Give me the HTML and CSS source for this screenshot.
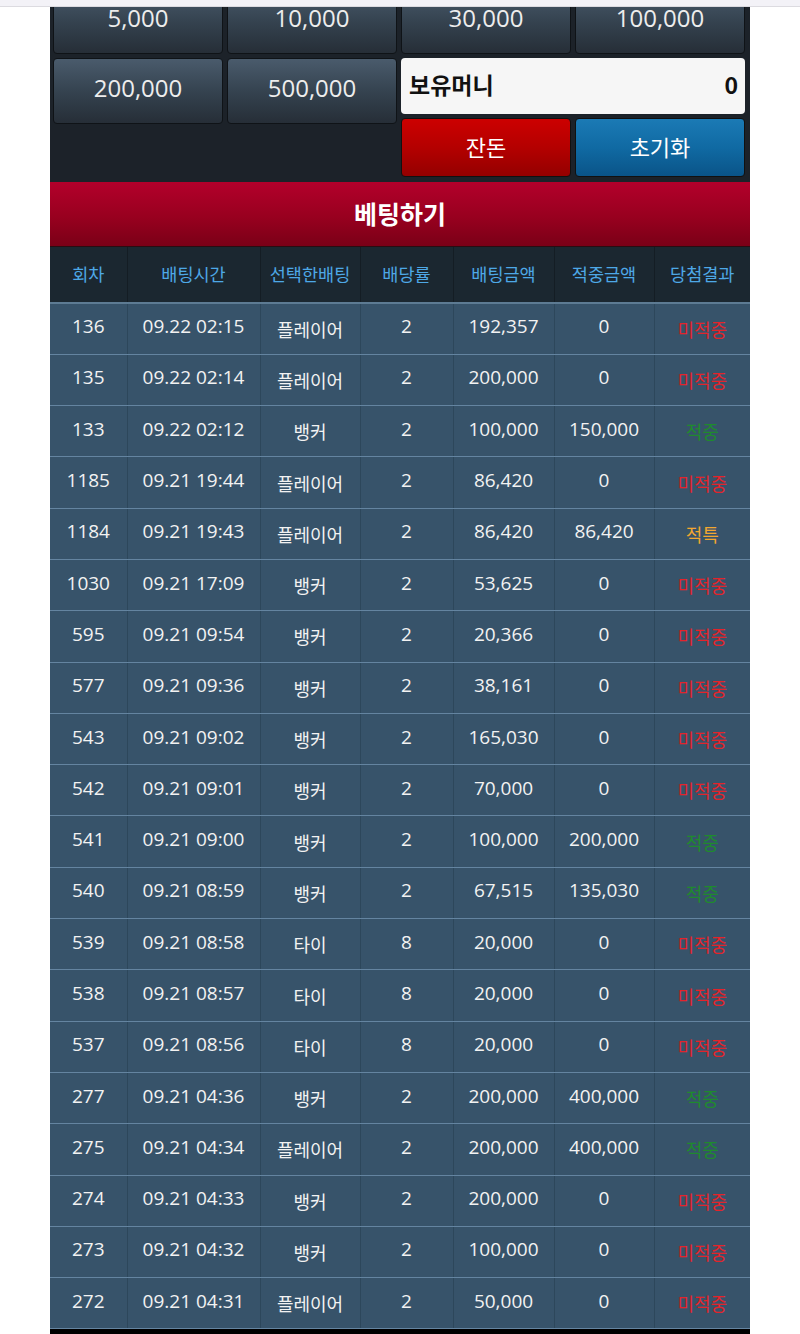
FILE: index.html
```html
<!DOCTYPE html>
<html lang="ko">
<head>
<meta charset="utf-8">
<title>베팅하기</title>
<link rel="stylesheet" href="styles.css">
</head>
<body>
<div class="topbar"></div>
<div class="viewport">
  <div class="panel">
    <div class="controls">
      <button class="chip">5,000</button>
      <button class="chip">10,000</button>
      <button class="chip">30,000</button>
      <button class="chip">100,000</button>
      <button class="chip">200,000</button>
      <button class="chip">500,000</button>
      <div class="side">
        <div class="balance"><span>보유머니</span><span>0</span></div>
        <div class="actions">
          <button class="btn red">잔돈</button>
          <button class="btn blue">초기화</button>
        </div>
      </div>
    </div>
    <div class="title">베팅하기</div>
    <table class="bets">
      <colgroup>
        <col class="c1"><col class="c2"><col class="c3"><col class="c4"><col class="c5"><col class="c6"><col class="c7">
      </colgroup>
      <thead>
        <tr><th>회차</th><th>배팅시간</th><th>선택한배팅</th><th>배당률</th><th>배팅금액</th><th>적중금액</th><th>당첨결과</th></tr>
      </thead>
      <tbody>
        <tr><td>136</td><td>09.22 02:15</td><td class="ko">플레이어</td><td>2</td><td>192,357</td><td>0</td><td class="ko lose">미적중</td></tr>
        <tr><td>135</td><td>09.22 02:14</td><td class="ko">플레이어</td><td>2</td><td>200,000</td><td>0</td><td class="ko lose">미적중</td></tr>
        <tr><td>133</td><td>09.22 02:12</td><td class="ko">뱅커</td><td>2</td><td>100,000</td><td>150,000</td><td class="ko win">적중</td></tr>
        <tr><td>1185</td><td>09.21 19:44</td><td class="ko">플레이어</td><td>2</td><td>86,420</td><td>0</td><td class="ko lose">미적중</td></tr>
        <tr><td>1184</td><td>09.21 19:43</td><td class="ko">플레이어</td><td>2</td><td>86,420</td><td>86,420</td><td class="ko tie">적특</td></tr>
        <tr><td>1030</td><td>09.21 17:09</td><td class="ko">뱅커</td><td>2</td><td>53,625</td><td>0</td><td class="ko lose">미적중</td></tr>
        <tr><td>595</td><td>09.21 09:54</td><td class="ko">뱅커</td><td>2</td><td>20,366</td><td>0</td><td class="ko lose">미적중</td></tr>
        <tr><td>577</td><td>09.21 09:36</td><td class="ko">뱅커</td><td>2</td><td>38,161</td><td>0</td><td class="ko lose">미적중</td></tr>
        <tr><td>543</td><td>09.21 09:02</td><td class="ko">뱅커</td><td>2</td><td>165,030</td><td>0</td><td class="ko lose">미적중</td></tr>
        <tr><td>542</td><td>09.21 09:01</td><td class="ko">뱅커</td><td>2</td><td>70,000</td><td>0</td><td class="ko lose">미적중</td></tr>
        <tr><td>541</td><td>09.21 09:00</td><td class="ko">뱅커</td><td>2</td><td>100,000</td><td>200,000</td><td class="ko win">적중</td></tr>
        <tr><td>540</td><td>09.21 08:59</td><td class="ko">뱅커</td><td>2</td><td>67,515</td><td>135,030</td><td class="ko win">적중</td></tr>
        <tr><td>539</td><td>09.21 08:58</td><td class="ko">타이</td><td>8</td><td>20,000</td><td>0</td><td class="ko lose">미적중</td></tr>
        <tr><td>538</td><td>09.21 08:57</td><td class="ko">타이</td><td>8</td><td>20,000</td><td>0</td><td class="ko lose">미적중</td></tr>
        <tr><td>537</td><td>09.21 08:56</td><td class="ko">타이</td><td>8</td><td>20,000</td><td>0</td><td class="ko lose">미적중</td></tr>
        <tr><td>277</td><td>09.21 04:36</td><td class="ko">뱅커</td><td>2</td><td>200,000</td><td>400,000</td><td class="ko win">적중</td></tr>
        <tr><td>275</td><td>09.21 04:34</td><td class="ko">플레이어</td><td>2</td><td>200,000</td><td>400,000</td><td class="ko win">적중</td></tr>
        <tr><td>274</td><td>09.21 04:33</td><td class="ko">뱅커</td><td>2</td><td>200,000</td><td>0</td><td class="ko lose">미적중</td></tr>
        <tr><td>273</td><td>09.21 04:32</td><td class="ko">뱅커</td><td>2</td><td>100,000</td><td>0</td><td class="ko lose">미적중</td></tr>
        <tr><td>272</td><td>09.21 04:31</td><td class="ko">플레이어</td><td>2</td><td>50,000</td><td>0</td><td class="ko lose">미적중</td></tr>
      </tbody>
    </table>
    <div class="footer"></div>
  </div>
</div>
</body>
</html>
```

FILE: styles.css
```css
* { box-sizing: border-box; }

html, body {
  margin: 0;
  padding: 0;
  background: #ffffff;
  font-family: "Open Sans", "Noto Sans CJK KR", sans-serif;
}

.topbar {
  height: 7px;
  background: #f3f2f7;
  border-bottom: 1px solid #dcdbe0;
}

.viewport {
  overflow: hidden;
  height: 1327px;
}

.panel {
  width: 700px;
  margin: -21px auto 0;
  background: #1c2229;
}

.controls {
  display: grid;
  grid-template-columns: repeat(4, 1fr);
  grid-template-rows: 66px auto;
  gap: 4px;
  padding: 2px 5px 5px 3px;
}

.chip {
  height: 66px;
  align-self: start;
  border: 1px solid #0f1317;
  border-radius: 4px;
  background: linear-gradient(to bottom, #4a5b6c 0%, #354350 50%, #262e37 100%);
  color: #ededed;
  font-family: "Open Sans", sans-serif;
  font-size: 24px;
  padding: 0 0 7px;
  cursor: pointer;
}

.side {
  grid-column: 3 / span 2;
  display: flex;
  flex-direction: column;
  gap: 4px;
}

.balance {
  height: 56px;
  background: #f6f6f6;
  border-radius: 4px;
  display: flex;
  justify-content: space-between;
  align-items: center;
  padding: 0 7px 4px 8px;
  font-family: "Noto Sans CJK KR", sans-serif;
  font-weight: 700;
  font-size: 23px;
  color: #111;
}

.actions {
  display: grid;
  grid-template-columns: 1fr 1fr;
  gap: 4px;
}

.btn {
  height: 59px;
  border-radius: 4px;
  border: 1px solid #111;
  color: #ffffff;
  font-family: "Noto Sans CJK KR", sans-serif;
  font-size: 22px;
  padding: 0 0 4px;
  cursor: pointer;
}

.btn.red {
  background: linear-gradient(to bottom, #cc0000 0%, #b40000 50%, #940000 100%);
}

.btn.blue {
  background: linear-gradient(to bottom, #1b7ab5 0%, #106aa3 50%, #0a5488 100%);
}

.title {
  height: 65px;
  display: flex;
  align-items: center;
  justify-content: center;
  background: linear-gradient(to bottom, #b3002b 0%, #98001f 55%, #7a0017 100%);
  border-bottom: 1px solid #2a0c12;
  color: #ffffff;
  font-family: "Noto Sans CJK KR", sans-serif;
  font-weight: 700;
  font-size: 25px;
  padding-bottom: 2px;
}

.bets {
  width: 700px;
  border-collapse: collapse;
  table-layout: fixed;
}

.c1 { width: 77px; }
.c2 { width: 133px; }
.c3 { width: 100px; }
.c4 { width: 93px; }
.c5 { width: 101px; }
.c6 { width: 100px; }
.c7 { width: 96px; }

.bets th {
  height: 56px;
  background: #1b2730;
  color: #4ea8e6;
  font-family: "Noto Sans CJK KR", sans-serif;
  font-weight: 400;
  font-size: 17.5px;
  text-align: center;
  border-left: 1px solid #141d24;
  border-bottom: 2px solid #5d7b93;
  padding: 0 0 2px;
  white-space: nowrap;
}

.bets th:first-child,
.bets td:first-child { border-left: none; }

.bets td {
  height: 51.3px;
  background: #37536a;
  color: #f2f2f2;
  font-size: 19px;
  text-align: center;
  border-left: 1px solid #2d475b;
  border-bottom: 1px solid #6484a0;
  padding: 0 0 5px;
  white-space: nowrap;
}

.bets td.ko {
  font-family: "Noto Sans CJK KR", sans-serif;
  font-size: 18px;
  padding: 0;
}

.bets td.lose { color: #e3242b; }
.bets td.win { color: #1f8a2e; }
.bets td.tie { color: #f2a730; }

.footer {
  height: 20px;
  background: #000000;
}
```
